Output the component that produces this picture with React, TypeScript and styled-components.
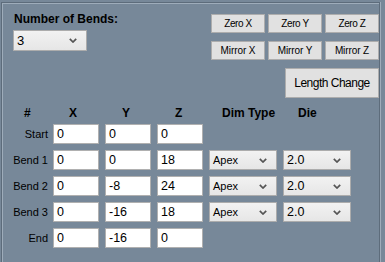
import styled, { createGlobalStyle } from "styled-components";

type Row = {
  label: string;
  x: string;
  y: string;
  z: string;
  bend: boolean;
};

const rows: Row[] = [
  { label: "Start", x: "0", y: "0", z: "0", bend: false },
  { label: "Bend 1", x: "0", y: "0", z: "18", bend: true },
  { label: "Bend 2", x: "0", y: "-8", z: "24", bend: true },
  { label: "Bend 3", x: "0", y: "-16", z: "18", bend: true },
  { label: "End", x: "0", y: "-16", z: "0", bend: false },
];

const GlobalStyle = createGlobalStyle`
  html, body {
    margin: 0;
    padding: 0;
    background: #778899;
    font-family: "Liberation Sans", Arial, sans-serif;
    overflow: hidden;
  }
`;

const Chevron = () => (
  <svg width="8" height="5" viewBox="0 0 8 5">
    <path d="M0.8 0.8 L4 4 L7.2 0.8" fill="none" stroke="#555" strokeWidth="1.7" />
  </svg>
);

export default function App() {
  return (
    <>
      <GlobalStyle />
      <Frame>
        <Top>
          <BendsBlock>
            <BoldLabel>Number of Bends:</BoldLabel>
            <Combo $width={74} $height={21} $size={13}>
              <span>3</span>
              <Chevron />
            </Combo>
          </BendsBlock>
          <Actions>
            <SmallButtons>
              <SmallButton $tight>Zero X</SmallButton>
              <SmallButton $tight>Zero Y</SmallButton>
              <SmallButton $tight>Zero Z</SmallButton>
              <SmallButton>Mirror X</SmallButton>
              <SmallButton>Mirror Y</SmallButton>
              <SmallButton>Mirror Z</SmallButton>
            </SmallButtons>
            <BigButton>Length Change</BigButton>
          </Actions>
        </Top>

        <HeaderRow>
          <HeaderCell $pad={17}>#</HeaderCell>
          <HeaderCell $pad={16}>X</HeaderCell>
          <HeaderCell $pad={17}>Y</HeaderCell>
          <HeaderCell $pad={18}>Z</HeaderCell>
          <HeaderCell $pad={13}>Dim Type</HeaderCell>
          <HeaderCell $pad={15}>Die</HeaderCell>
        </HeaderRow>

        <Table>
          {rows.map((r) => (
            <Line key={r.label}>
              <RowLabel>{r.label}</RowLabel>
              <Field>{r.x}</Field>
              <Field>{r.y}</Field>
              <Field>{r.z}</Field>
              {r.bend ? (
                <>
                  <Combo $width={68} $height={20} $size={11}>
                    <span>Apex</span>
                    <Chevron />
                  </Combo>
                  <Combo $width={68} $height={20} $size={12.5}>
                    <span>2.0</span>
                    <Chevron />
                  </Combo>
                </>
              ) : null}
            </Line>
          ))}
        </Table>
      </Frame>
    </>
  );
}

const Frame = styled.div`
  box-sizing: border-box;
  margin: 2px 0 0 1px;
  width: 379px;
  height: 260px;
  border: 1px solid #5d6c7b;
  border-bottom: none;
  box-shadow: inset 1px 1px 0 #9eacba, 1px 0 0 #9eacba;
`;

const Top = styled.div`
  display: flex;
  justify-content: space-between;
`;

const BendsBlock = styled.div`
  display: flex;
  flex-direction: column;
  padding: 9px 0 0 11px;
`;

const BoldLabel = styled.div`
  font-size: 12px;
  font-weight: bold;
  line-height: 14px;
  color: #000;
  padding-left: 1px;
  margin-bottom: 4px;
`;

const Combo = styled.div<{ $width: number; $height: number; $size: number }>`
  box-sizing: border-box;
  width: ${({ $width }) => $width}px;
  height: ${({ $height }) => $height}px;
  display: flex;
  align-items: center;
  justify-content: space-between;
  padding: 0 9px 0 3px;
  background: linear-gradient(#f2f2f2, #e6e6e6);
  border: 1px solid #acacac;
  font-size: ${({ $size }) => $size}px;
  color: #000;
`;

const Actions = styled.div`
  display: flex;
  flex-direction: column;
  align-items: flex-end;
  padding-top: 11px;
`;

const SmallButtons = styled.div`
  display: grid;
  grid-template-columns: repeat(3, 54px);
  grid-auto-rows: 19px;
  column-gap: 3px;
  row-gap: 8px;
`;

const SmallButton = styled.div<{ $tight?: boolean }>`
  box-sizing: border-box;
  display: flex;
  align-items: center;
  justify-content: center;
  background: #e1e1e1;
  border: 1px solid #adadad;
  font-size: 10px;
  letter-spacing: ${({ $tight }) => ($tight ? "-0.4px" : "-0.1px")};
  color: #000;
`;

const BigButton = styled.div`
  box-sizing: border-box;
  width: 94px;
  height: 30px;
  margin-top: 8px;
  display: flex;
  align-items: center;
  justify-content: center;
  background: #e1e1e1;
  border: 1px solid #adadad;
  font-size: 12px;
  letter-spacing: -0.5px;
  color: #000;
`;

const columns = "40px 46px 46px 46px 68px 68px";

const HeaderRow = styled.div`
  display: grid;
  grid-template-columns: ${columns};
  column-gap: 6px;
  padding-left: 5px;
  margin-top: 8px;
  margin-bottom: 3px;
`;

const HeaderCell = styled.div<{ $pad: number }>`
  font-size: 12px;
  font-weight: bold;
  line-height: 15px;
  padding-left: ${({ $pad }) => $pad}px;
  color: #000;
  white-space: nowrap;
`;

const Table = styled.div`
  display: flex;
  flex-direction: column;
  gap: 6px;
  padding-left: 5px;
`;

const Line = styled.div`
  display: grid;
  grid-template-columns: ${columns};
  grid-auto-rows: 20px;
  column-gap: 6px;
`;

const RowLabel = styled.div`
  display: flex;
  align-items: center;
  justify-content: flex-end;
  font-size: 11px;
  color: #000;
  margin-right: -1px;
`;

const Field = styled.div`
  box-sizing: border-box;
  display: flex;
  align-items: center;
  padding-left: 3px;
  background: #fff;
  border: 1px solid #b0b0b0;
  font-size: 12.5px;
  color: #000;
`;
